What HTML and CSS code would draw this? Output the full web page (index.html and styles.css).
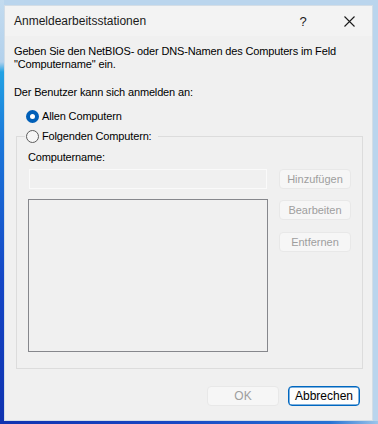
FILE: index.html
```html
<!DOCTYPE html>
<html lang="de">
<head>
    <meta charset="UTF-8">
    <title>Anmeldearbeitsstationen</title>
    <link rel="stylesheet" href="styles.css">
</head>
<body>
    <div class="dialog">
        <div class="titlebar">
            <span class="title">Anmeldearbeitsstationen</span>
            <span class="caption-btn help">?</span>
            <span class="caption-btn close">
                <svg width="11" height="11" viewBox="0 0 11 11"><path d="M0.5 0.5 L10.5 10.5 M10.5 0.5 L0.5 10.5" stroke="#1a1a1a" stroke-width="1.1" fill="none"/></svg>
            </span>
        </div>

        <div class="content">
            <p class="intro">Geben Sie den NetBIOS- oder DNS-Namen des Computers im Feld<br>"Computername" ein.</p>
            <p class="prompt">Der Benutzer kann sich anmelden an:</p>

            <label class="radio-row first">
                <input type="radio" name="target" checked>
                <span>Allen Computern</span>
            </label>

            <fieldset class="group">
                <legend>
                    <label class="radio-row">
                        <input type="radio" name="target">
                        <span>Folgenden Computern:</span>
                    </label>
                </legend>
                <div class="group-body">
                    <div class="field-label">Computername:</div>
                    <div class="editor">
                        <input class="name-box" type="text" disabled>
                        <button class="btn" disabled>Hinzufügen</button>
                        <div class="list-box"></div>
                        <div class="side-buttons">
                            <button class="btn" disabled>Bearbeiten</button>
                            <button class="btn" disabled>Entfernen</button>
                        </div>
                    </div>
                </div>
            </fieldset>
        </div>

        <div class="footer">
            <button class="btn footer-btn" disabled>OK</button>
            <button class="btn footer-btn default">Abbrechen</button>
        </div>
    </div>
</body>
</html>
```

FILE: styles.css
```css
html, body {
    margin: 0;
    height: 424px;
    overflow: hidden;
}

body {
    font-family: "Liberation Sans", Arial, sans-serif;
    font-size: 11px;
    color: #000;
    background:
        linear-gradient(to bottom, #c3dbef 0, #b3d1ec 62px, #22a2e4 72px, #1b78da 140px, #1446c6 280px, #0f32b0 424px) left top / 4px 100% no-repeat,
        linear-gradient(to right, #0f32b0 0, #1848c4 180px, #2672d4 330px, #9cc5ea 378px) left bottom / 100% 3px no-repeat,
        #bad5ed;
}

.dialog {
    margin: 5px 0 0 4px;
    width: 369px;
    height: 416px;
    box-sizing: border-box;
    background-color: #f0f0f0;
    border: 1px solid #d3dde6;
    display: flex;
    flex-direction: column;
}

.titlebar {
    height: 30px;
    display: flex;
    align-items: center;
    background-color: #f3f3f3;
}

.title {
    flex: 1;
    padding-left: 9px;
    font-size: 12px;
    color: #1a1a1a;
}

.caption-btn {
    width: 46px;
    height: 30px;
    display: flex;
    align-items: center;
    justify-content: center;
    font-size: 13px;
    color: #1a1a1a;
}

.content {
    padding: 9px 0 0 9px;
    letter-spacing: -0.15px;
}

.intro {
    margin: 0;
    line-height: 13px;
    white-space: nowrap;
}

.prompt {
    margin: 15px 0 0;
    line-height: 13px;
}

.radio-row {
    display: flex;
    align-items: center;
    height: 13px;
    line-height: 13px;
}

.radio-row.first {
    margin: 11px 0 0 12px;
}

.radio-row input {
    appearance: none;
    margin: 0 3px 0 0;
    width: 13px;
    height: 13px;
    border-radius: 50%;
    box-sizing: border-box;
    border: 1px solid #5c5c5c;
    background-color: #f6f6f6;
}

.radio-row input:checked {
    border: 4px solid #005fb8;
    background-color: #fff;
}

.group {
    margin: 7px 9px 0 2px;
    padding: 8px 11px 16px 8px;
    border: 1px solid #dcdcdc;
    min-width: 0;
}

.group legend {
    padding: 0 6px 0 1px;
}

.group-body {
    padding-left: 3px;
}

.field-label {
    line-height: 13px;
}

.editor {
    margin-top: 5px;
    display: grid;
    grid-template-columns: 240px 72px;
    column-gap: 11px;
    row-gap: 10px;
}

.name-box {
    margin: 0 1px;
    height: 20px;
    box-sizing: border-box;
    border: 1px solid #fafafa;
    background-color: #f0f0f0;
}

.list-box {
    height: 153px;
    box-sizing: border-box;
    border: 1px solid #86878c;
}

.side-buttons {
    display: flex;
    flex-direction: column;
    gap: 12px;
    padding-top: 1px;
}

.btn {
    height: 20px;
    width: 72px;
    padding: 0;
    box-sizing: border-box;
    font-family: "Liberation Sans", Arial, sans-serif;
    font-size: 11px;
    border: 1px solid #e8e8e8;
    border-radius: 4px;
    background-color: #f6f6f6;
    color: #9e9e9e;
}

.footer {
    margin-top: auto;
    padding: 0 12px 14px 0;
    display: flex;
    justify-content: flex-end;
    gap: 9px;
}

.footer-btn {
    font-size: 12px;
}

.footer-btn.default {
    border: 1px solid #0067c0;
    box-shadow: inset 0 0 0 0.5px #0067c0;
    background-color: #fdfdfd;
    color: #000;
}
```
